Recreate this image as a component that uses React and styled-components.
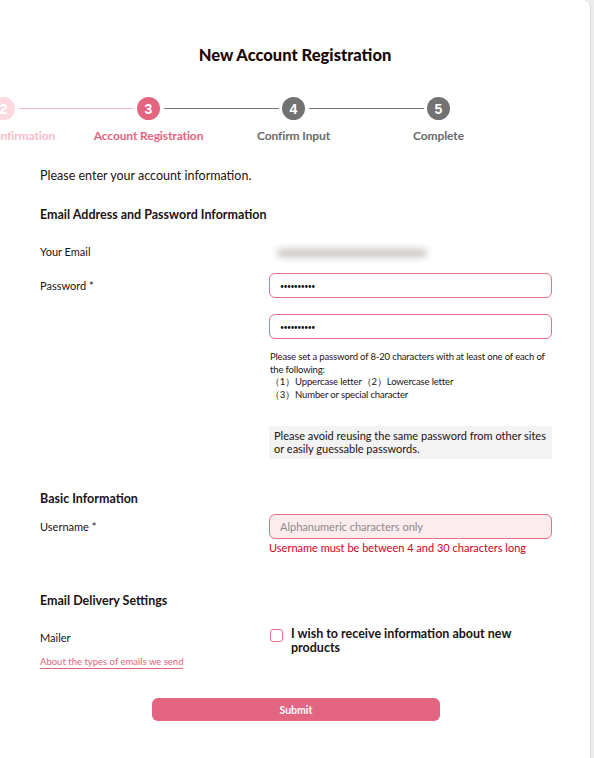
import React from "react";
import styled, { createGlobalStyle } from "styled-components";

const Global = createGlobalStyle`
  html, body { margin: 0; padding: 0; background: #ececec; }
  body { font-family: Lato, "Noto Sans", "Liberation Sans", sans-serif; color: #1c1212; }
  * { box-sizing: border-box; }
`;

const Card = styled.div`
  width: 591px;
  min-height: 758px;
  background: #fff;
  border-right: 1px solid #dcdcdc;
  border-top-right-radius: 8px;
  overflow: hidden;
  padding-top: 45px;
  padding-bottom: 36px;
`;

const Title = styled.h1`
  margin: 0;
  text-align: center;
  font-size: 16.5px;
  font-weight: 900;
  line-height: 20px;
  color: #1a0808;
`;

const Stepper = styled.div`
  display: flex;
  margin-top: 32px;
  margin-left: -69px;
`;

const Step = styled.div`
  position: relative;
  flex: 0 0 145px;
  display: flex;
  flex-direction: column;
  align-items: center;
  &::after {
    content: "";
    display: ${(p) => (p.$last ? "none" : "block")};
    position: absolute;
    top: 11px;
    left: calc(50% + 15px);
    width: 115px;
    height: 1px;
    background: ${(p) => p.$lineColor};
  }
`;

const Circle = styled.div`
  width: 23px;
  height: 23px;
  border-radius: 50%;
  background: ${(p) => p.$bg};
  color: #fff;
  font-family: "Liberation Sans", Arial, sans-serif;
  font-weight: 700;
  font-size: 14px;
  display: flex;
  align-items: center;
  justify-content: center;
`;

const StepLabel = styled.div`
  margin-top: 8px;
  white-space: nowrap;
  font-size: 12px;
  font-weight: 700;
  color: ${(p) => p.$color};
  letter-spacing: -0.1px;
`;

const Body = styled.div`
  padding-left: 40px;
`;

const Intro = styled.p`
  margin: 25px 0 0;
  font-size: 12.5px;
  line-height: 16px;
`;

const Heading = styled.h2`
  margin: ${(p) => p.$mt || 0}px 0 0;
  font-size: 12.5px;
  font-weight: 700;
  line-height: 16px;
`;

const Row = styled.div`
  display: grid;
  grid-template-columns: 229px 283px;
  margin-top: ${(p) => p.$mt || 0}px;
  align-items: start;
`;

const Label = styled.div`
  font-size: 11px;
  line-height: 14px;
  padding-top: ${(p) => p.$pt || 0}px;
`;

const Blur = styled.div`
  width: 150px;
  height: 10px;
  margin-left: 8px;
  margin-top: 3px;
  background: #d4cece;
  filter: blur(3px);
  border-radius: 4px;
`;

const Field = styled.div`
  display: flex;
  flex-direction: column;
`;

const Input = styled.input`
  width: 283px;
  height: 25px;
  border: 1px solid #e3718a;
  border-radius: 6px;
  background: ${(p) => (p.$error ? "#fdeced" : "#fff")};
  padding: 0 10px;
  font-family: inherit;
  font-size: ${(p) => (p.type === "password" ? "7px" : "11px")};
  letter-spacing: ${(p) => (p.type === "password" ? "-0.6px" : "0")};
  color: #111;
  outline: none;
  margin-top: ${(p) => p.$mt || 0}px;
  &::placeholder { color: #8a8a8a; }
`;

const Hint = styled.div`
  margin-top: 12px;
  padding-left: 1px;
  font-size: 9.5px;
  line-height: 12.5px;
  letter-spacing: -0.15px;
`;

const Notice = styled.div`
  margin-top: 25px;
  background: #f3f3f3;
  padding: 3px 5px 4px;
  font-size: 11px;
  line-height: 13px;
`;

const Error = styled.div`
  margin-top: 2px;
  color: #d1001a;
  font-size: 11px;
  line-height: 14px;
`;

const LinkText = styled.a`
  display: inline-block;
  margin-top: 11px;
  color: #e3647e;
  font-size: 9.5px;
  line-height: 12px;
  text-decoration: none;
  border-bottom: 1px solid #e3647e;
`;

const Check = styled.label`
  display: flex;
  align-items: flex-start;
  gap: 8px;
  font-size: 12.5px;
  font-weight: 700;
  line-height: 14px;
  padding-right: 20px;
`;

const Box = styled.span`
  flex: 0 0 13px;
  width: 13px;
  height: 13px;
  margin-top: 2px;
  margin-left: 1px;
  border: 1.5px solid #e3718a;
  border-radius: 3px;
`;

const Submit = styled.button`
  display: flex;
  align-items: center;
  justify-content: center;
  margin: 29px 0 0 112px;
  width: 288px;
  height: 23px;
  border: none;
  border-radius: 6px;
  background: #e4657f;
  color: #fff;
  font-family: inherit;
  font-weight: 700;
  font-size: 10.5px;
`;

const steps = [
  { n: 2, label: "Terms Confirmation", bg: "#fcd9e0", color: "#f8bcc8", line: "#f6b7c4" },
  { n: 3, label: "Account Registration", bg: "#e4657f", color: "#e4657f", line: "#777" },
  { n: 4, label: "Confirm Input", bg: "#727272", color: "#6a6a6a", line: "#777" },
  { n: 5, label: "Complete", bg: "#727272", color: "#6a6a6a", line: "#777" },
];

export default function App() {
  return (
    <>
      <Global />
      <Card>
        <Title>New Account Registration</Title>
        <Stepper>
          {steps.map((s, i) => (
            <Step key={s.n} $lineColor={s.line} $last={i === steps.length - 1}>
              <Circle $bg={s.bg}>{s.n}</Circle>
              <StepLabel $color={s.color}>{s.label}</StepLabel>
            </Step>
          ))}
        </Stepper>
        <Body>
          <Intro>Please enter your account information.</Intro>
          <Heading $mt={23}>Email Address and Password Information</Heading>
          <Row $mt={22}>
            <Label>Your Email</Label>
            <Blur />
          </Row>
          <Row $mt={14}>
            <Label $pt={6}>Password *</Label>
            <Field>
              <Input type="password" defaultValue="abcdefghij" />
              <Input type="password" defaultValue="abcdefghij" $mt={16} />
              <Hint>
                Please set a password of 8-20 characters with at least one of each of the following:
                <br />（1）Uppercase letter（2）Lowercase letter
                <br />（3）Number or special character
              </Hint>
              <Notice>
                Please avoid reusing the same password from other sites or easily guessable passwords.
              </Notice>
            </Field>
          </Row>
          <Heading $mt={32}>Basic Information</Heading>
          <Row $mt={7}>
            <Label $pt={6}>Username *</Label>
            <Field>
              <Input $error placeholder="Alphanumeric characters only" />
              <Error>Username must be between 4 and 30 characters long</Error>
            </Field>
          </Row>
          <Heading $mt={38}>Email Delivery Settings</Heading>
          <Row $mt={18}>
            <Field>
              <Label $pt={4}>Mailer</Label>
              <div><LinkText href="#">About the types of emails we send</LinkText></div>
            </Field>
            <Check>
              <Box />
              <span>I wish to receive information about new products</span>
            </Check>
          </Row>
          <Submit type="button">Submit</Submit>
        </Body>
      </Card>
    </>
  );
}
